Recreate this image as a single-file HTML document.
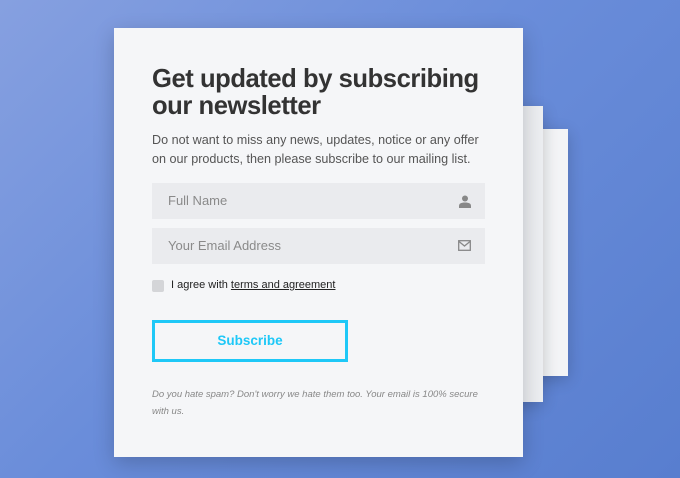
<!DOCTYPE html>
<html><head><style>
*{margin:0;padding:0;box-sizing:border-box}
body{width:680px;height:478px;overflow:hidden;background:linear-gradient(135deg,#86a0e0 0%,#6a8dda 45%,#587ecf 100%);font-family:"Liberation Sans",sans-serif;position:relative}
.c3{position:absolute;left:530px;top:129px;width:38px;height:247px;background:#f3f4f6;box-shadow:0 4px 16px rgba(0,0,0,.2)}
.c2{position:absolute;left:500px;top:106px;width:43px;height:296px;background:#eceef1;box-shadow:0 4px 16px rgba(0,0,0,.2)}
.main{position:absolute;left:114px;top:28px;width:409px;height:429px;background:#f5f6f8;box-shadow:0 6px 20px rgba(0,0,0,.2)}
h1{position:absolute;left:38px;top:38px;font-size:25.6px;line-height:27px;font-weight:bold;color:#333;letter-spacing:-0.45px;white-space:nowrap}
p.d{position:absolute;left:38px;top:103px;font-size:12.6px;line-height:19px;color:#555;width:330px}
.in{position:absolute;left:38px;width:333px;height:36px;background:#eaebee;color:#8a8a8a;font-size:13px;line-height:36px;padding-left:16px}
.in svg{position:absolute;right:14px;top:12px}
.cb{position:absolute;left:38px;top:252px;width:12px;height:12px;border-radius:2px;background:#d4d5d8}
.ag{position:absolute;left:57px;top:251px;font-size:11px;color:#222}
.ag u{text-decoration:underline}
.btn{position:absolute;left:38px;top:292px;width:196px;height:42px;border:3px solid #1ec8f7;color:#1ec8f7;font-weight:bold;font-size:13.5px;text-align:center;line-height:36px}
.f{position:absolute;left:38px;top:358px;width:335px;font-size:9.5px;line-height:17px;color:#888;font-style:italic}
</style></head><body>
<div class="c3"></div><div class="c2"></div>
<div class="main">
<h1>Get updated by subscribing<br>our newsletter</h1>
<p class="d">Do not want to miss any news, updates, notice or any offer on our products, then please subscribe to our mailing list.</p>
<div class="in" style="top:155px">Full Name<svg width="12" height="13" viewBox="0 0 12 13"><circle cx="6" cy="3.5" r="3" fill="#888"/><path d="M0 13v-2c0-2.5 2-3.5 6-3.5s6 1 6 3.5v2z" fill="#888"/></svg></div>
<div class="in" style="top:200px">Your Email Address<svg width="13" height="11" viewBox="0 0 13 11"><rect x="0.7" y="0.7" width="11.6" height="9.6" fill="none" stroke="#888" stroke-width="1.3"/><path d="M1 1.5l5.5 4.5 5.5-4.5" fill="none" stroke="#888" stroke-width="1.3"/></svg></div>
<div class="cb"></div>
<div class="ag">I agree with <u>terms and agreement</u></div>
<div class="btn">Subscribe</div>
<div class="f">Do you hate spam? Don't worry we hate them too. Your email is 100% secure with us.</div>
</div>
</body></html>
